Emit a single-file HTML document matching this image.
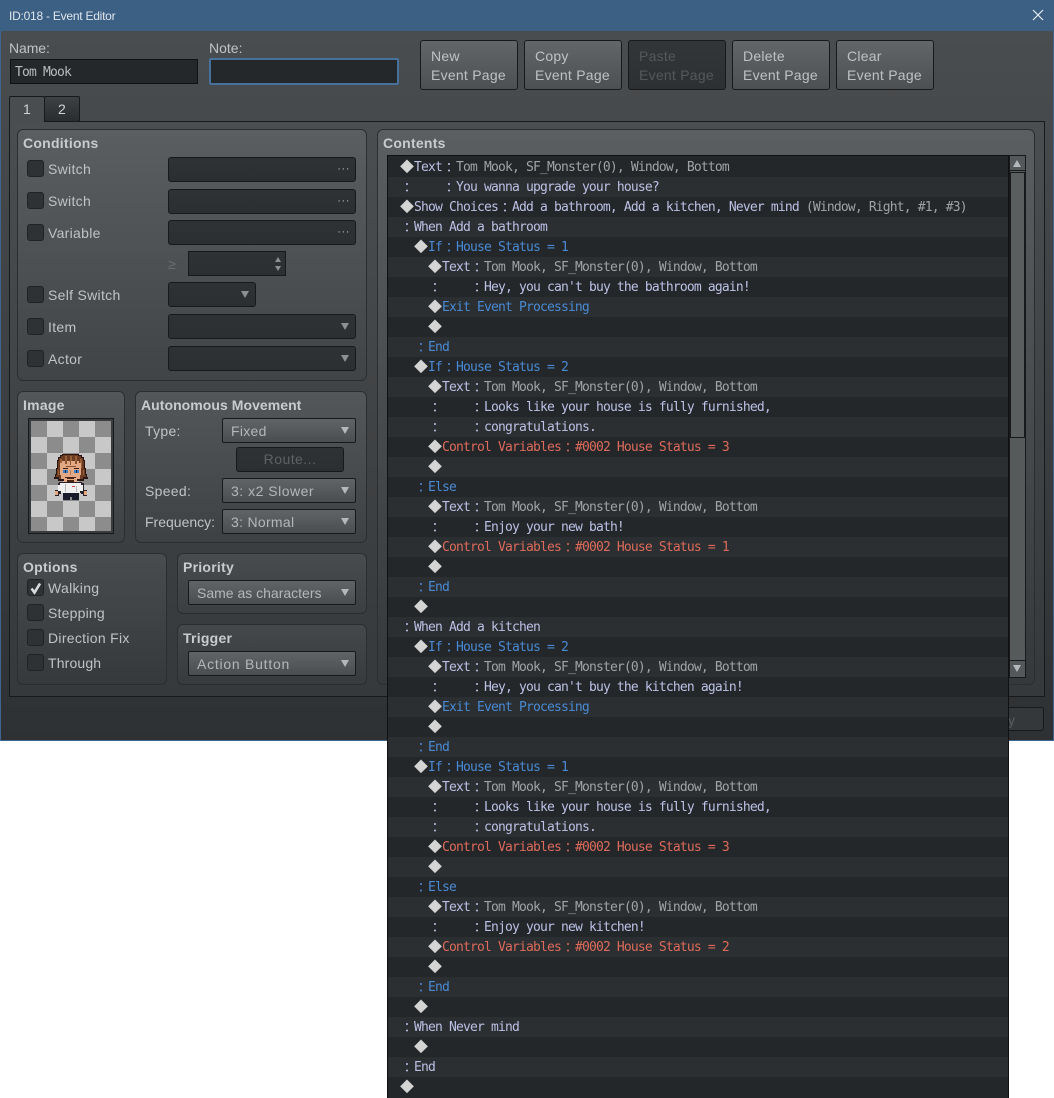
<!DOCTYPE html>
<html><head><meta charset="utf-8"><style>
*{box-sizing:border-box}
html,body{margin:0;padding:0;background:#fff;width:1054px;height:1098px;overflow:hidden}
body{position:relative;font-family:"Liberation Sans",sans-serif;font-size:14px;color:#c0c3c5;letter-spacing:.3px}
.a{position:absolute}
.t{position:absolute;white-space:nowrap;line-height:18px;height:18px}
#win{position:absolute;left:0;top:0;width:1054px;height:741px;background:linear-gradient(#4b4e50,#3c3f41 55%,#2e3133);border:1px solid #3d658f;border-top:0}
#bar{position:absolute;left:0;top:0;width:1054px;height:31px;background:#3c5f84}
.g{position:absolute;border:1px solid #2b2e30;border-radius:6px;background:linear-gradient(#5a5d5f,#3c3f41)}
.h{position:absolute;white-space:nowrap;font-weight:bold;font-size:14px;line-height:18px;color:#c9cccd;letter-spacing:.25px}
.in{position:absolute;border:1px solid #111;background:#25282b}
.cb{position:absolute;left:27px;width:17px;height:17px;border:1px solid #202224;border-radius:3px;background:#2f3235}
.f{position:absolute;border:1px solid #17191a;border-radius:3px;background:linear-gradient(#2f3235,#2c2f32)}
.c{position:absolute;border:1px solid #17191a;border-radius:2px;background:linear-gradient(#606466,#4b4e50);line-height:23px;padding:1px 0 0 8px;color:#b4b7b9;white-space:nowrap}
.b{position:absolute;top:40px;width:98px;height:50px;border:1px solid #17191a;border-radius:3px;background:linear-gradient(#636668,#4d5052);padding:6px 0 0 10px;line-height:19px;color:#bfc2c4;white-space:nowrap;letter-spacing:.25px}
.dn{position:absolute;right:6px;top:8px;width:0;height:0;border-left:4px solid transparent;border-right:4px solid transparent;border-top:7px solid #b5b8ba}
.f .dn{border-top-color:#8d9092}
.dots{position:absolute;right:5px;top:7px;color:#b6b9bb;font-size:11px;line-height:9px;letter-spacing:.6px}
#list{position:absolute;left:387px;top:155px;width:622px;height:943px;border:1px solid #111;border-bottom:0;background:#24272a;overflow:hidden;padding-top:1px}
.r{height:20px;line-height:22px;white-space:pre;font-family:"DejaVu Sans Mono","Liberation Mono",monospace;font-size:13px;letter-spacing:-.83px;color:#bcc0e4;background:#24272a}
.r:nth-child(even){background:#2b2f32}
.r i,.r u{font-style:normal;text-decoration:none;display:inline-block;width:14px;text-align:center;font-family:"Noto Sans CJK JP",sans-serif;letter-spacing:0;line-height:18px;vertical-align:top;position:relative;top:1px}
.r i{color:#d4d4d4;font-size:14px}
.l0{padding-left:12px}.l1{padding-left:26px}.l2{padding-left:40px}
.e{color:#a0a3a5}
.bl,.bl *{color:#4a8ad4}
.rd,.rd *{color:#dd6a5a}
.s{display:inline-block;width:28px}
</style></head><body>
<div id="win"></div>
<div id="bar"></div>
<div class="t" style="left:9px;top:7px;font-size:12px;color:#dfe5ea;letter-spacing:-.24px">ID:018 - Event Editor</div>
<svg class="a" style="left:1032px;top:9px" width="12" height="12"><path d="M1 1L11 11M11 1L1 11" stroke="#e8edf1" stroke-width="1.2"/></svg>

<div class="t" style="left:9px;top:39px;letter-spacing:-.1px">Name:</div>
<div class="in" style="left:10px;top:59px;width:188px;height:25px"></div>
<div class="t" style="left:15px;top:63px;line-height:19px;font-family:'DejaVu Sans Mono',monospace;font-size:13px;letter-spacing:-.83px;color:#b9bcbe">Tom Mook</div>
<div class="t" style="left:209px;top:39px;letter-spacing:0">Note:</div>
<div class="in" style="left:209px;top:58px;width:190px;height:27px;border:2px solid #47709b;border-radius:2px"></div>

<div class="b" style="left:420px">New<br>Event Page</div>
<div class="b" style="left:524px">Copy<br>Event Page</div>
<div class="b" style="left:628px;background:linear-gradient(#333639,#2d3033);color:#55585a">Paste<br>Event Page</div>
<div class="b" style="left:732px">Delete<br>Event Page</div>
<div class="b" style="left:836px">Clear<br>Event Page</div>

<!-- pane -->
<div class="a" style="left:9px;top:121px;width:1036px;height:576px;border:1px solid #17191a;background:linear-gradient(#4b4e50,#36393b)"></div>
<div class="a" style="left:44px;top:96px;width:36px;height:25px;border:1px solid #17191a;border-bottom:0;border-radius:2px 2px 0 0;background:linear-gradient(#3e4143,#2a2d2f)"></div>
<div class="a" style="left:9px;top:96px;width:36px;height:26px;border:1px solid #17191a;border-bottom:0;border-radius:2px 2px 0 0;background:#4a4d4f"></div>
<div class="t" style="left:23px;top:100px;color:#d0d3d5">1</div>
<div class="t" style="left:58px;top:100px;color:#d0d3d5">2</div>

<!-- conditions -->
<div class="g" style="left:17px;top:129px;width:350px;height:252px;background:linear-gradient(#5b5e60,#414446)"></div>
<div class="h" style="left:23px;top:134px">Conditions</div>
<div class="cb" style="top:160px"></div><div class="t" style="left:48px;top:160px">Switch</div>
<div class="cb" style="top:192px"></div><div class="t" style="left:48px;top:192px">Switch</div>
<div class="cb" style="top:224px"></div><div class="t" style="left:48px;top:224px">Variable</div>
<div class="cb" style="top:286px"></div><div class="t" style="left:48px;top:286px">Self Switch</div>
<div class="cb" style="top:318px"></div><div class="t" style="left:48px;top:318px">Item</div>
<div class="cb" style="top:350px"></div><div class="t" style="left:48px;top:350px">Actor</div>
<div class="f" style="left:168px;top:157px;width:188px;height:25px"><span class="dots">···</span></div>
<div class="f" style="left:168px;top:189px;width:188px;height:25px"><span class="dots">···</span></div>
<div class="f" style="left:168px;top:220px;width:188px;height:25px"><span class="dots">···</span></div>
<div class="t" style="left:168px;top:255px;color:#6a6d6f;font-size:14px">≥</div>
<div class="f" style="left:188px;top:251px;width:98px;height:25px;border-radius:0">
<span class="a" style="right:4px;top:5px;border-left:3px solid transparent;border-right:3px solid transparent;border-bottom:5px solid #8d9092"></span>
<span class="a" style="right:4px;top:14px;border-left:3px solid transparent;border-right:3px solid transparent;border-top:5px solid #8d9092"></span></div>
<div class="f" style="left:168px;top:282px;width:88px;height:25px"><span class="dn"></span></div>
<div class="f" style="left:168px;top:314px;width:188px;height:25px"><span class="dn"></span></div>
<div class="f" style="left:168px;top:346px;width:188px;height:25px"><span class="dn"></span></div>

<!-- image -->
<div class="g" style="left:17px;top:391px;width:108px;height:152px;background:linear-gradient(#54575a,#3e4143)"></div>
<div class="h" style="left:23px;top:396px">Image</div>
<svg class="a" style="left:28px;top:418px" width="86" height="116" viewBox="0 0 86 116" shape-rendering="crispEdges">
<rect width="86" height="116" fill="#17191a"/><rect x="1" y="1" width="84" height="114" fill="#3a3d3f"/>
<rect x="3" y="3" width="80" height="110" fill="#c8c8c8"/>
<g fill="#8c8c8c">
<rect x="3" y="3" width="16" height="16"/><rect x="35" y="3" width="16" height="16"/><rect x="67" y="3" width="16" height="16"/>
<rect x="19" y="19" width="16" height="16"/><rect x="51" y="19" width="16" height="16"/>
<rect x="3" y="35" width="16" height="16"/><rect x="35" y="35" width="16" height="16"/><rect x="67" y="35" width="16" height="16"/>
<rect x="19" y="51" width="16" height="16"/><rect x="51" y="51" width="16" height="16"/>
<rect x="3" y="67" width="16" height="16"/><rect x="35" y="67" width="16" height="16"/><rect x="67" y="67" width="16" height="16"/>
<rect x="19" y="83" width="16" height="16"/><rect x="51" y="83" width="16" height="16"/>
<rect x="3" y="99" width="16" height="14"/><rect x="35" y="99" width="16" height="14"/><rect x="67" y="99" width="16" height="14"/>
</g>
<g transform="translate(-28,-418)">
<path d="M62 454H79V455H82V457H84V460H85V468H86V474H87V477H88V479H84V481H58V479H54V477H55V474H56V468H57V460H58V457H60V455H62Z" fill="#2a1510"/>
<path d="M63 455H78V456H81V458H83V461H84V469H85V475H86V477H83V479H59V477H56V475H57V469H58V461H59V458H61V456H63Z" fill="#6b3b22"/>
<path d="M60 459h2v9h-2zM65 456h2v5h-2zM70 456h2v5h-2zM75 456h2v5h-2zM80 459h2v9h-2zM58 470h1v5h-1zM83 470h1v5h-1z" fill="#9a6138"/>
<path d="M62 461h17v2h2v12h-1v4h-3v3h-13v-3h-3v-4h-1v-12h2z" fill="#e3a884"/>
<path d="M65 461h2v3h-2zM70 461h1v4h-1zM75 461h2v3h-2zM66 466h10v1h-10z" fill="#8a5230"/>
<rect x="63" y="468" width="5" height="1" fill="#3a1d10"/><rect x="74" y="468" width="5" height="1" fill="#3a1d10"/>
<rect x="63" y="470" width="5" height="3" fill="#3f7fc4"/><rect x="74" y="470" width="5" height="3" fill="#3f7fc4"/>
<rect x="65" y="470" width="1" height="3" fill="#1c2c4c"/><rect x="76" y="470" width="1" height="3" fill="#1c2c4c"/>
<rect x="70" y="470" width="1" height="5" fill="#b97c5c"/>
<path d="M65 477h11v1h-2v1h-7v-1h-2zM67 480h7v2h-7z" fill="#4a2515"/>
<path d="M59 482h23v1h2v7h3v6h-4v-2h-2v-1h-20v1h-2v2h-4v-6h3v-7h1z" fill="#2a2228"/>
<path d="M60 483h21v2h2v6h-3v2h-19v-2h-3v-6h2z" fill="#efefef"/>
<path d="M65 484h1v8h-1zM76 486h1v6h-1z" fill="#b8b8bc"/>
<rect x="72" y="486" width="3" height="1" fill="#c8444a"/>
<rect x="55" y="491" width="3" height="4" fill="#e3a884"/><rect x="84" y="491" width="3" height="4" fill="#e3a884"/>
<rect x="63" y="493" width="16" height="7" fill="#191c2a"/><rect x="70" y="497" width="2" height="3" fill="#8c8c8c"/>
</g>
</svg>

<!-- autonomous -->
<div class="g" style="left:135px;top:391px;width:232px;height:152px;background:linear-gradient(#54575a,#3e4143)"></div>
<div class="h" style="left:141px;top:396px;letter-spacing:.05px">Autonomous Movement</div>
<div class="t" style="left:145px;top:422px">Type:</div>
<div class="c" style="left:222px;top:418px;width:134px;height:25px">Fixed<span class="dn"></span></div>
<div class="f" style="left:236px;top:447px;width:108px;height:25px;text-align:center;line-height:23px;color:#5f6264;letter-spacing:.45px">Route...</div>
<div class="t" style="left:145px;top:482px">Speed:</div>
<div class="c" style="left:222px;top:478px;width:134px;height:25px;letter-spacing:.5px">3: x2 Slower<span class="dn"></span></div>
<div class="t" style="left:145px;top:513px;letter-spacing:0">Frequency:</div>
<div class="c" style="left:222px;top:509px;width:134px;height:25px">3: Normal<span class="dn"></span></div>

<!-- options -->
<div class="g" style="left:17px;top:553px;width:150px;height:132px;background:linear-gradient(#494c4e,#36393b)"></div>
<div class="h" style="left:23px;top:558px">Options</div>
<div class="cb" style="top:579px"><svg class="a" style="left:1px;top:1px" width="14" height="14"><path d="M2.5 7.5L5.5 11.5L11 2.5" fill="none" stroke="#d8dadb" stroke-width="2.6"/></svg></div>
<div class="t" style="left:48px;top:579px">Walking</div>
<div class="cb" style="top:604px"></div><div class="t" style="left:48px;top:604px;letter-spacing:.2px">Stepping</div>
<div class="cb" style="top:629px"></div><div class="t" style="left:48px;top:629px">Direction Fix</div>
<div class="cb" style="top:654px"></div><div class="t" style="left:48px;top:654px;letter-spacing:.15px">Through</div>

<div class="g" style="left:177px;top:553px;width:190px;height:61px;background:linear-gradient(#494c4e,#3c3f41)"></div>
<div class="h" style="left:183px;top:558px">Priority</div>
<div class="c" style="left:188px;top:580px;width:168px;height:25px;letter-spacing:0">Same as characters<span class="dn"></span></div>
<div class="g" style="left:177px;top:624px;width:190px;height:61px;background:linear-gradient(#45484a,#383b3d)"></div>
<div class="h" style="left:183px;top:629px">Trigger</div>
<div class="c" style="left:188px;top:651px;width:168px;height:25px;letter-spacing:.75px">Action Button<span class="dn"></span></div>

<!-- contents -->
<div class="g" style="left:377px;top:129px;width:658px;height:556px;background:linear-gradient(#5b5e60,#36393b)"></div>
<div class="h" style="left:383px;top:134px">Contents</div>

<!-- scrollbar -->
<div class="a" style="left:1009px;top:155px;width:17px;height:523px;border:1px solid #17191a;background:#565a5b"></div>
<div class="a" style="left:1010px;top:156px;width:15px;height:15px;border-bottom:1px solid #17191a;background:#54585a"></div>
<div class="a" style="left:1013px;top:160px;border-left:4px solid transparent;border-right:4px solid transparent;border-bottom:7px solid #b5b8ba"></div>
<div class="a" style="left:1010px;top:172px;width:15px;height:266px;border:1px solid #17191a;background:#5a5e5f"></div>
<div class="a" style="left:1010px;top:660px;width:15px;height:17px;border-top:1px solid #17191a;background:#54585a"></div>
<div class="a" style="left:1013px;top:665px;border-left:4px solid transparent;border-right:4px solid transparent;border-top:7px solid #b5b8ba"></div>

<!-- bottom button -->
<div class="a" style="left:1000px;top:707px;width:44px;height:24px;border:1px solid #17191a;border-radius:3px;background:#35383b"></div>
<div class="t" style="left:1008px;top:711px;color:#5a5d5f">y</div>

<!-- list -->
<div id="list">
<div class="r l0"><i>◆</i>Text<u>：</u><span class="e">Tom Mook, SF_Monster(0), Window, Bottom</span></div>
<div class="r l0"><u>：</u><span class="s"></span><u>：</u>You wanna upgrade your house?</div>
<div class="r l0"><i>◆</i>Show Choices<u>：</u>Add a bathroom, Add a kitchen, Never mind <span class="e">(Window, Right, #1, #3)</span></div>
<div class="r l0"><u>：</u>When Add a bathroom</div>
<div class="r l1 bl"><i style="color:#d4d4d4">◆</i>If<u>：</u>House Status = 1</div>
<div class="r l2"><i>◆</i>Text<u>：</u><span class="e">Tom Mook, SF_Monster(0), Window, Bottom</span></div>
<div class="r l2"><u>：</u><span class="s"></span><u>：</u>Hey, you can't buy the bathroom again!</div>
<div class="r l2 bl"><i style="color:#d4d4d4">◆</i>Exit Event Processing</div>
<div class="r l2"><i>◆</i></div>
<div class="r l1 bl"><u>：</u>End</div>
<div class="r l1 bl"><i style="color:#d4d4d4">◆</i>If<u>：</u>House Status = 2</div>
<div class="r l2"><i>◆</i>Text<u>：</u><span class="e">Tom Mook, SF_Monster(0), Window, Bottom</span></div>
<div class="r l2"><u>：</u><span class="s"></span><u>：</u>Looks like your house is fully furnished,</div>
<div class="r l2"><u>：</u><span class="s"></span><u>：</u>congratulations.</div>
<div class="r l2 rd"><i style="color:#d4d4d4">◆</i>Control Variables<u>：</u>#0002 House Status = 3</div>
<div class="r l2"><i>◆</i></div>
<div class="r l1 bl"><u>：</u>Else</div>
<div class="r l2"><i>◆</i>Text<u>：</u><span class="e">Tom Mook, SF_Monster(0), Window, Bottom</span></div>
<div class="r l2"><u>：</u><span class="s"></span><u>：</u>Enjoy your new bath!</div>
<div class="r l2 rd"><i style="color:#d4d4d4">◆</i>Control Variables<u>：</u>#0002 House Status = 1</div>
<div class="r l2"><i>◆</i></div>
<div class="r l1 bl"><u>：</u>End</div>
<div class="r l1"><i>◆</i></div>
<div class="r l0"><u>：</u>When Add a kitchen</div>
<div class="r l1 bl"><i style="color:#d4d4d4">◆</i>If<u>：</u>House Status = 2</div>
<div class="r l2"><i>◆</i>Text<u>：</u><span class="e">Tom Mook, SF_Monster(0), Window, Bottom</span></div>
<div class="r l2"><u>：</u><span class="s"></span><u>：</u>Hey, you can't buy the kitchen again!</div>
<div class="r l2 bl"><i style="color:#d4d4d4">◆</i>Exit Event Processing</div>
<div class="r l2"><i>◆</i></div>
<div class="r l1 bl"><u>：</u>End</div>
<div class="r l1 bl"><i style="color:#d4d4d4">◆</i>If<u>：</u>House Status = 1</div>
<div class="r l2"><i>◆</i>Text<u>：</u><span class="e">Tom Mook, SF_Monster(0), Window, Bottom</span></div>
<div class="r l2"><u>：</u><span class="s"></span><u>：</u>Looks like your house is fully furnished,</div>
<div class="r l2"><u>：</u><span class="s"></span><u>：</u>congratulations.</div>
<div class="r l2 rd"><i style="color:#d4d4d4">◆</i>Control Variables<u>：</u>#0002 House Status = 3</div>
<div class="r l2"><i>◆</i></div>
<div class="r l1 bl"><u>：</u>Else</div>
<div class="r l2"><i>◆</i>Text<u>：</u><span class="e">Tom Mook, SF_Monster(0), Window, Bottom</span></div>
<div class="r l2"><u>：</u><span class="s"></span><u>：</u>Enjoy your new kitchen!</div>
<div class="r l2 rd"><i style="color:#d4d4d4">◆</i>Control Variables<u>：</u>#0002 House Status = 2</div>
<div class="r l2"><i>◆</i></div>
<div class="r l1 bl"><u>：</u>End</div>
<div class="r l1"><i>◆</i></div>
<div class="r l0"><u>：</u>When Never mind</div>
<div class="r l1"><i>◆</i></div>
<div class="r l0"><u>：</u>End</div>
<div class="r l0"><i>◆</i></div>
</div>
</body></html>
